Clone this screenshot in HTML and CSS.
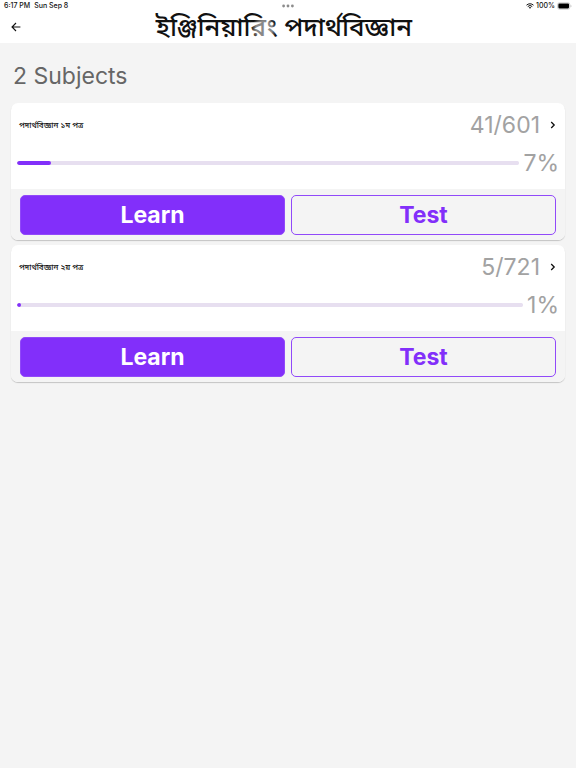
FILE: index.html
```html
<!DOCTYPE html>
<html lang="bn">
<head>
<meta charset="utf-8">
<meta name="viewport" content="width=device-width, initial-scale=1">
<title>ইঞ্জিনিয়ারিং পদার্থবিজ্ঞান</title>
<link rel="stylesheet" href="styles.css">
</head>
<body>
<header class="top">
  <div class="status">
    <span class="status-side"><span>6:17 PM</span><span>Sun Sep 8</span></span>
    <svg class="dots" viewBox="0 0 12 4" aria-hidden="true"><circle cx="1.6" cy="2" r="1.4"/><circle cx="6" cy="2" r="1.4"/><circle cx="10.4" cy="2" r="1.4"/></svg>
    <span class="status-side status-right">
      <svg class="wifi" viewBox="0 0 16 12" aria-hidden="true"><path d="M1 4.4a10 10 0 0 1 14 0M3.5 7.1a6.4 6.4 0 0 1 9 0" fill="none" stroke="#111" stroke-width="2"/><path d="M8 11.7 5.5 9.2a3.6 3.6 0 0 1 5 0z" fill="#111"/></svg>
      <span>100%</span>
      <svg class="battery" viewBox="0 0 28 14" aria-hidden="true"><rect x="1" y="1" width="23" height="12" rx="3.5" fill="none" stroke="#aaa"/><rect x="2.5" y="2.5" width="20" height="9" rx="2" fill="#000"/><path d="M25.5 5v4q1.5-.5 1.5-2t-1.5-2" fill="#aaa"/></svg>
    </span>
  </div>
  <div class="nav">
    <button class="back" type="button" aria-label="Back"><svg viewBox="0 0 10 10" aria-hidden="true"><path d="M9.4 5H1M5 1 1 5l4 4" fill="none" stroke="#111" stroke-width="1.1"/></svg></button>
    <h1 class="title">ইঞ্জিনিয়ারিং পদার্থবিজ্ঞান</h1>
  </div>
</header>
<main class="content">
  <h2 class="count">2 Subjects</h2>
  <article class="card">
    <a class="subject" href="#first">
      <span class="name">পদার্থবিজ্ঞান ১ম পত্র</span>
      <span class="score">41/601</span>
      <svg class="chevron" viewBox="0 0 6 8" aria-hidden="true"><path d="m1.2 1 3 3-3 3" fill="none" stroke="#111" stroke-width="1.3"/></svg>
    </a>
    <div class="progress-row">
      <progress class="bar" value="41" max="601" aria-label="পদার্থবিজ্ঞান ১ম পত্র"></progress>
      <span class="percent">7%</span>
    </div>
    <div class="actions">
      <button class="action learn" type="button">Learn</button>
      <button class="action test" type="button">Test</button>
    </div>
  </article>
  <article class="card">
    <a class="subject" href="#second">
      <span class="name">পদার্থবিজ্ঞান ২য় পত্র</span>
      <span class="score">5/721</span>
      <svg class="chevron" viewBox="0 0 6 8" aria-hidden="true"><path d="m1.2 1 3 3-3 3" fill="none" stroke="#111" stroke-width="1.3"/></svg>
    </a>
    <div class="progress-row">
      <progress class="bar" value="5" max="721" aria-label="পদার্থবিজ্ঞান ২য় পত্র"></progress>
      <span class="percent">1%</span>
    </div>
    <div class="actions">
      <button class="action learn" type="button">Learn</button>
      <button class="action test" type="button">Test</button>
    </div>
  </article>
</main>
</body>
</html>
```
FILE: styles.css
```css
* { box-sizing: border-box; }
body {
  margin: 0;
  background: #f4f4f4;
  font-family: Inter, "Noto Sans Bengali", "Noto Sans", sans-serif;
}
.top { background: #fff; height: 43px; }
.status {
  display: flex;
  align-items: center;
  height: 12px;
  padding: 0 4px;
  font-size: 7px;
  line-height: 12px;
  font-weight: 500;
  color: #111;
}
.status-side { flex: 1; display: flex; align-items: center; gap: 4px; }
.status-right { justify-content: flex-end; gap: 2px; }
.dots { width: 12px; height: 4px; fill: #8c8c8c; }
.wifi { width: 8px; height: 6px; }
.battery { width: 15px; height: 8px; }
.nav {
  display: grid;
  grid-template-columns: 32px 1fr 40px;
  align-items: center;
  height: 30px;
}
.back {
  display: flex;
  align-items: center;
  justify-content: center;
  height: 30px;
  padding: 0;
  border: 0;
  background: none;
}
.back svg { width: 10px; height: 10px; }
.title {
  position: relative;
  justify-self: center;
  margin: 0;
  font-size: 26px;
  line-height: 30px;
  font-weight: 500;
  color: #111;
  white-space: nowrap;
}
.title::after {
  content: "";
  position: absolute;
  left: 37%;
  top: 4px;
  width: 26px;
  height: 26px;
  background: radial-gradient(circle, rgba(255, 255, 255, .5) 45%, rgba(255, 255, 255, 0) 70%);
}
.content { padding: 17px 11px; }
.count {
  margin: 0 2px 11px;
  font-size: 23px;
  line-height: 32px;
  font-weight: 400;
  color: #666;
}
.card {
  margin-bottom: 5px;
  background: #fff;
  border-radius: 7px;
  box-shadow: 0 1px 1px rgba(0, 0, 0, .2);
  overflow: hidden;
}
.subject {
  display: flex;
  align-items: center;
  height: 44px;
  padding: 0 9px 0 8px;
  color: #111;
  text-decoration: none;
}
.name { flex: 1; font-size: 8px; font-weight: 500; }
.score, .percent { font-size: 23px; line-height: 32px; font-weight: 400; color: #a2a2a2; }
.score { margin-right: 10px; }
.chevron { width: 6px; height: 8px; }
.progress-row {
  display: flex;
  align-items: center;
  gap: 4px;
  height: 42px;
  padding: 0 6px 10px;
}
.bar {
  appearance: none;
  flex: 1;
  min-width: 0;
  height: 4px;
  border: 0;
  border-radius: 2px;
  overflow: hidden;
  background: #e7dff0;
}
.bar::-webkit-progress-bar { background: #e7dff0; border-radius: 2px; }
.bar::-webkit-progress-value { background: #822ffa; border-radius: 2px; }
.actions {
  display: grid;
  grid-template-columns: 1fr 1fr;
  gap: 6px;
  padding: 6px 9px 5px;
  background: #f4f4f4;
}
.action {
  height: 40px;
  padding: 0;
  border: 1px solid #9149f9;
  border-radius: 5px;
  font-family: inherit;
  font-size: 23px;
  line-height: 32px;
  font-weight: 700;
}
.learn { background: #822ffa; color: #fff; }
.test { background: transparent; color: #822ffa; }
```
